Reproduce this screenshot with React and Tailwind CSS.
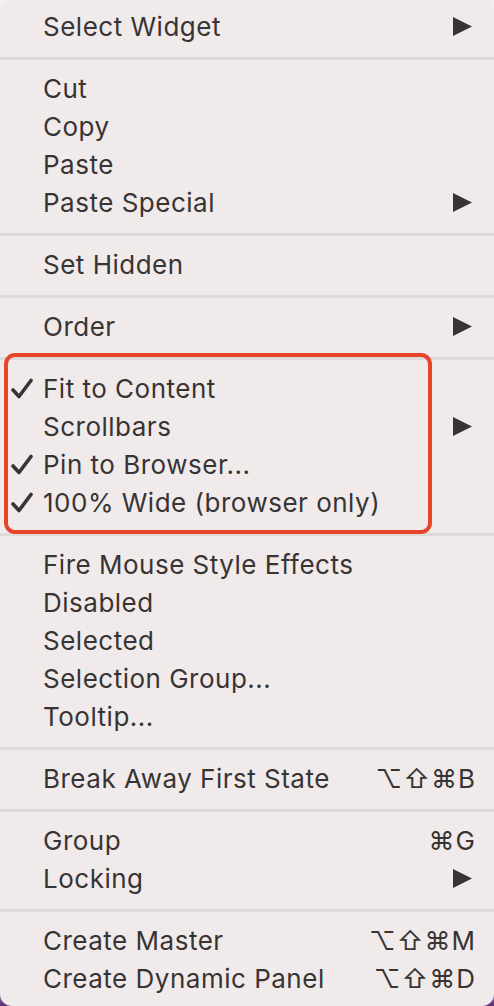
const GROUPS = [
  [{ label: 'Select Widget', submenu: true }],
  [
    { label: 'Cut' },
    { label: 'Copy' },
    { label: 'Paste' },
    { label: 'Paste Special', submenu: true },
  ],
  [{ label: 'Set Hidden' }],
  [{ label: 'Order', submenu: true }],
  [
    { label: 'Fit to Content', checked: true },
    { label: 'Scrollbars', submenu: true },
    { label: 'Pin to Browser...', checked: true },
    { label: '100% Wide (browser only)', checked: true },
  ],
  [
    { label: 'Fire Mouse Style Effects' },
    { label: 'Disabled' },
    { label: 'Selected' },
    { label: 'Selection Group...' },
    { label: 'Tooltip...' },
  ],
  [{ label: 'Break Away First State', shortcut: '⌥⇧⌘B' }],
  [
    { label: 'Group', shortcut: '⌘G' },
    { label: 'Locking', submenu: true },
  ],
  [
    { label: 'Create Master', shortcut: '⌥⇧⌘M' },
    { label: 'Create Dynamic Panel', shortcut: '⌥⇧⌘D' },
  ],
];

function Check() {
  return (
    <svg width="22" height="22" viewBox="0 0 22 22" className="absolute left-[11px] top-[9px]">
      <path d="M2 12 L8 18.5 L20 2.5" fill="none" stroke="#383434" strokeWidth="3.6" strokeLinecap="round" strokeLinejoin="round" />
    </svg>
  );
}

function Arrow() {
  return (
    <svg width="19" height="19" viewBox="0 0 19 19" className="mr-[4px]">
      <polygon points="0,0 19,9.5 0,19" fill="#383434" />
    </svg>
  );
}

function Row({ item }) {
  return (
    <div className="relative flex h-[38px] items-center pl-[43px] pr-[18px] leading-[38px]">
      {item.checked && <Check />}
      <span className="flex-1 pt-[1px] tracking-[0.5px]">{item.label}</span>
      {item.submenu && <Arrow />}
      {item.shortcut && (
        <span className="pt-[1px] tracking-[1px]" style={{ fontFamily: '"Inter", "DejaVu Sans", sans-serif' }}>
          {item.shortcut}
        </span>
      )}
    </div>
  );
}

// macOS-style context menu with an annotation box over the checked items
export default function App() {
  return (
    <div className="min-h-[1006px] w-[494px] bg-[linear-gradient(to_bottom,#f3eeee_0%,#f3eeee_97%,#5a2c78_100%)]">
      <div
        className="relative h-[1006px] overflow-hidden rounded-[12px] bg-[#f0eaea] pt-[7px] text-[26px] text-[#383434]"
        style={{ fontFamily: '"Inter", "Helvetica Neue", Arial, sans-serif' }}
      >
        {GROUPS.map((group, gi) => (
          <div key={gi}>
            {gi > 0 && (
              <div className="pt-[12px] pb-[9px]">
                <div className="h-[3px] bg-[#dfdada]" />
              </div>
            )}
            {group.map((item) => (
              <Row key={item.label} item={item} />
            ))}
          </div>
        ))}
        <div className="absolute left-[4px] top-[353px] h-[181px] w-[428px] rounded-[11px] border-[4.5px] border-[#e8432b]" />
      </div>
    </div>
  );
}
